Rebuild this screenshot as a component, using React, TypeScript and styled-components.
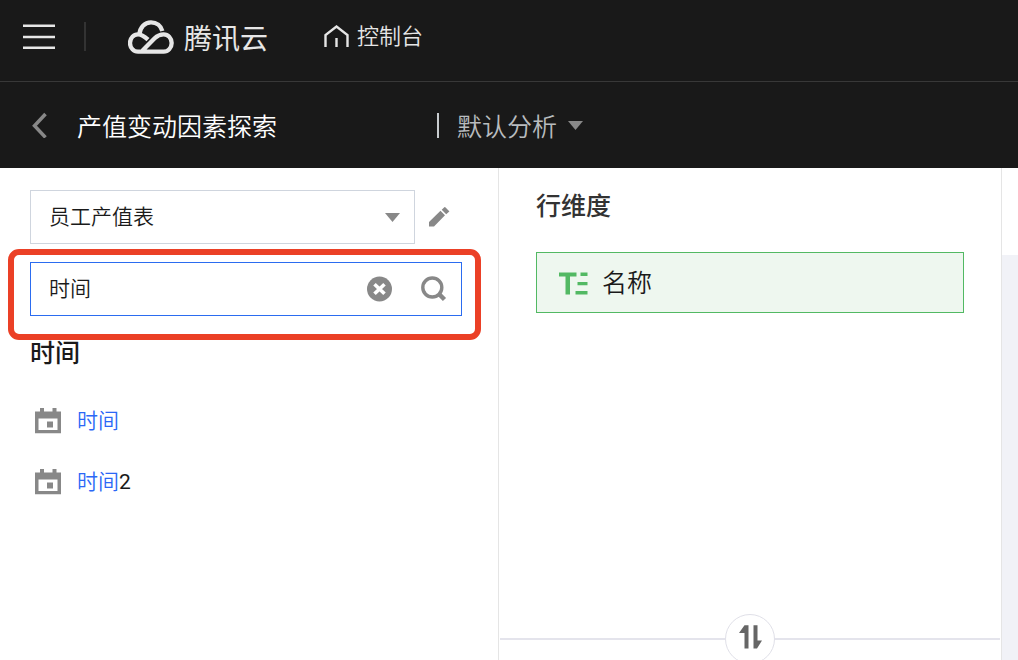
import React, { useState } from 'react';
import styled, { createGlobalStyle } from 'styled-components';

const headingFont = '"Noto Sans CJK SC", Roboto, sans-serif';

const GlobalStyle = createGlobalStyle`
  *, *::before, *::after { box-sizing: border-box; }
  body {
    margin: 0;
    background: #fff;
    color: #1a1a1a;
    font-family: Roboto, "Noto Sans CJK SC", sans-serif;
    font-size: 21px;
    font-weight: 350;
    line-height: 30px;
  }
  button, input, select { font: inherit; color: inherit; }
  h1, h2, ul { margin: 0; padding: 0; }
  svg { display: block; flex: none; }
`;

const Shell = styled.div`
  display: flex;
  flex-direction: column;
  height: 100vh;
  overflow: hidden;
`;

const TopBar = styled.header`
  display: flex;
  flex: none;
  align-items: center;
  height: 82px;
  padding: 0 23px 8px;
  background: #191919;
  border-bottom: 1px solid #383838;
  color: #e6e6e6;
`;

const IconButton = styled.button`
  display: flex;
  flex: none;
  padding: 0;
  border: 0;
  background: none;
  color: #888;
  cursor: pointer;
`;

const MenuButton = styled(IconButton)`
  color: #e6e6e6;
`;

const TopDivider = styled.span`
  width: 2px;
  height: 29px;
  margin: 0 42px 0 29px;
  background: #333;
`;

const Brand = styled.a`
  display: flex;
  align-items: center;
  gap: 10px;
  color: inherit;
  font-family: ${headingFont};
  font-size: 28px;
  font-weight: 400;
  line-height: 40px;
  text-decoration: none;
`;

const ConsoleLink = styled.a`
  display: flex;
  align-items: center;
  gap: 8px;
  margin-left: 56px;
  color: inherit;
  font-size: 22px;
  text-decoration: none;
`;

const TitleBar = styled.div`
  display: flex;
  flex: none;
  align-items: center;
  height: 86px;
  padding: 0 32px;
  background: #191919;
  color: #fff;
  font-family: ${headingFont};
  font-size: 25px;
  line-height: 36px;
`;

const Title = styled.h1`
  width: 360px;
  margin-left: 29px;
  font-size: 25px;
  font-weight: inherit;
`;

const AnalysisButton = styled.button`
  display: flex;
  align-items: center;
  gap: 11px;
  padding: 0;
  border: 0;
  background: none;
  color: #b8bcbf;
  cursor: pointer;

  &::before {
    content: "";
    width: 2px;
    height: 25px;
    margin-right: 7px;
    background: #c8cccf;
  }
  svg { color: #888; }
`;

const Workspace = styled.main`
  display: grid;
  flex: 1;
  grid-template-columns: 499px minmax(0, 1fr) 17px;
  min-height: 0;
`;

const FieldPanel = styled.aside`
  padding: 22px 36px 0 30px;
  border-right: 1px solid #e5e5e5;
`;

const TableRow = styled.div`
  display: flex;
  align-items: center;
  gap: 14px;
  padding-right: 12px;
`;

const SelectBox = styled.label`
  display: grid;
  flex: 1;
  grid-template-columns: minmax(0, 1fr) 15px;
  align-items: center;
  height: 54px;
  padding-right: 14px;
  border: 1px solid #cfd5de;
  color: #888;
`;

const Select = styled.select`
  grid-area: 1 / 1 / 2 / 3;
  width: 100%;
  height: 52px;
  padding: 0 18px;
  border: 0;
  outline: 0;
  appearance: none;
  background: none;
  color: #1a1a1a;
`;

const SelectArrow = styled.span`
  grid-area: 1 / 2;
  pointer-events: none;
`;

const SearchBox = styled.div`
  position: relative;
  display: flex;
  align-items: center;
  gap: 28px;
  height: 54px;
  margin-top: 18px;
  padding: 0 14px 0 18px;
  border: 1px solid #2b6cf0;

  &::after {
    content: "";
    position: absolute;
    inset: -14px -20px -25px -23px;
    border: 6px solid #eb4026;
    border-radius: 11px;
    pointer-events: none;
  }
`;

const SearchInput = styled.input`
  flex: 1;
  min-width: 0;
  padding: 0;
  border: 0;
  outline: 0;
  background: none;
`;

const GroupTitle = styled.h2`
  margin-top: 17px;
  font-family: ${headingFont};
  font-size: 25px;
  font-weight: 500;
  line-height: 36px;
`;

const FieldList = styled.ul`
  margin-top: 21px;
  list-style: none;
`;

const FieldItem = styled.li`
  display: flex;
  align-items: center;
  gap: 16px;
  height: 61px;
  padding-left: 5px;
  font-weight: 400;
`;

const Match = styled.span`
  color: #2b67f6;
  font-weight: 350;
`;

const DimensionPanel = styled.section`
  display: flex;
  flex-direction: column;
  min-width: 0;
`;

const DropZone = styled.div`
  flex: none;
  height: 446px;
  padding: 18px 37px 0;
`;

const ZoneTitle = styled.h2`
  color: #333;
  font-family: ${headingFont};
  font-size: 25px;
  font-weight: 500;
  line-height: 36px;
`;

const Chip = styled.div`
  display: flex;
  align-items: center;
  gap: 14px;
  height: 61px;
  margin-top: 30px;
  padding: 2px 22px 0;
  border: 1px solid #52b963;
  background: #eef7ef;
  color: #1a1a1a;
  font-size: 25px;
`;

const SwapDivider = styled.div`
  display: flex;
  flex: none;
  align-items: center;
  padding: 0 1px;

  &::before, &::after {
    content: "";
    flex: 1;
    height: 2px;
    background: #e4e4ec;
  }
`;

const SwapButton = styled.button`
  display: flex;
  align-items: center;
  justify-content: center;
  width: 50px;
  height: 50px;
  padding: 0 0 4px;
  border: 1px solid #e0e0e8;
  border-radius: 50%;
  background: #fff;
  cursor: pointer;
`;

const CanvasEdge = styled.section`
  padding-top: 87px;
  border-left: 1px solid #e5e5e5;
  background: #f1f2f7 content-box;
`;

const Caret = () => (
  <svg width="15" height="9" viewBox="0 0 15 9" aria-hidden="true">
    <path d="M0 0h15L7.500 9z" fill="currentColor" />
  </svg>
);

const CloudLogo = () => (
  <svg width="46" height="34" viewBox="384 58 138 102" fill="none" stroke="currentColor" strokeWidth="13" aria-hidden="true">
    <path d="M444 117C431 105 424 101 414 101A24 26 0 0 0 414 153H491A24 26 0 0 0 491 101C479 101 471 106 464 113L427 150" />
    <path d="M418 101C420 80 434 65 453 65C470 65 483 76 487 91" />
  </svg>
);

const HomeIcon = () => (
  <svg width="25" height="24" viewBox="0 0 25 24" fill="none" stroke="currentColor" strokeWidth="2.400" aria-hidden="true">
    <path d="M1.500 22V10L12.500 1.500L23.500 10V22M12.500 13V22" />
  </svg>
);

const CalendarIcon = () => (
  <svg width="26" height="26" viewBox="0 0 26 26" fill="#888" aria-hidden="true">
    <path fillRule="evenodd" d="M0 3.500h5V0h4v3.500h8.500V0h4v3.500H26v21.800H0zM3.500 10.500v11.500h19V10.500z" />
    <path d="M12 13.500h6v6h-6z" />
  </svg>
);

export default function App() {
  const [keyword, setKeyword] = useState('时间');

  return (
    <>
      <GlobalStyle />
      <Shell>
        <TopBar>
          <MenuButton type="button" aria-label="菜单">
            <svg width="32" height="26" viewBox="0 0 32 26" fill="currentColor">
              <path d="M0 0.500h32v2.500H0zM0 11.700h32v2.500H0zM0 22.500h32v2.500H0z" />
            </svg>
          </MenuButton>
          <TopDivider />
          <Brand href="#">
            <CloudLogo />
            腾讯云
          </Brand>
          <ConsoleLink href="#console">
            <HomeIcon />
            控制台
          </ConsoleLink>
        </TopBar>

        <TitleBar>
          <IconButton type="button" aria-label="返回">
            <svg width="16" height="26" viewBox="0 0 16 26" fill="none" stroke="currentColor" strokeWidth="3.500">
              <path d="M13.500 2L2.500 13.700L13.500 25.400" />
            </svg>
          </IconButton>
          <Title>产值变动因素探索</Title>
          <AnalysisButton type="button">
            默认分析
            <Caret />
          </AnalysisButton>
        </TitleBar>

        <Workspace>
          <FieldPanel>
            <TableRow>
              <SelectBox>
                <Select aria-label="数据表">
                  <option>员工产值表</option>
                </Select>
                <SelectArrow>
                  <Caret />
                </SelectArrow>
              </SelectBox>
              <IconButton type="button" aria-label="编辑">
                <svg width="21" height="20" viewBox="0 0 21 20" fill="currentColor">
                  <path d="M0 19.500V15L11.500 3.700L16 8.200L5 19.500zM12.700 2.700L15.300 0.200Q15.800 -0.200 16.300 0.200L20 3.900Q20.500 4.400 20 4.800L17.200 7.200z" />
                </svg>
              </IconButton>
            </TableRow>

            <SearchBox>
              <SearchInput
                type="text"
                aria-label="搜索字段"
                value={keyword}
                onChange={(event) => setKeyword(event.target.value)}
              />
              <IconButton type="button" aria-label="清除" onClick={() => setKeyword('')}>
                <svg width="26" height="26" viewBox="0 0 26 26">
                  <circle cx="12.500" cy="13" r="12.500" fill="currentColor" />
                  <path d="M7.500 8.200L17.500 17.800M17.500 8.200L7.500 17.800" stroke="#fff" strokeWidth="3.600" />
                </svg>
              </IconButton>
              <IconButton type="button" aria-label="搜索">
                <svg width="26" height="26" viewBox="0 0 26 26" fill="none" stroke="currentColor">
                  <circle cx="11.300" cy="11.500" r="9.500" strokeWidth="3.400" />
                  <path d="M17.500 17.500L23.500 23.500" strokeWidth="4.500" />
                </svg>
              </IconButton>
            </SearchBox>

            <GroupTitle>时间</GroupTitle>
            <FieldList>
              <FieldItem>
                <CalendarIcon />
                <span><Match>时间</Match></span>
              </FieldItem>
              <FieldItem>
                <CalendarIcon />
                <span><Match>时间</Match>2</span>
              </FieldItem>
            </FieldList>
          </FieldPanel>

          <DimensionPanel>
            <DropZone>
              <ZoneTitle>行维度</ZoneTitle>
              <Chip>
                <svg width="29" height="23" viewBox="0 0 29 23" fill="#52b963" aria-hidden="true">
                  <path d="M0 0.500h17.500v4h-6.500v18H6.500v-18H0zM21.500 0.500H28.500v3.500h-7zM18.500 10H28.500v3.200H18.500zM16.500 19H28.500v3.500H16.500z" />
                </svg>
                名称
              </Chip>
            </DropZone>
            <SwapDivider>
              <SwapButton type="button" aria-label="行列互换">
                <svg width="23" height="24" viewBox="0 0 23 24" fill="#666" aria-hidden="true">
                  <path d="M5.500 0.300H9.500V23.500H5.500V8H0zM14.500 0.300H18.500V15.500H23L18 23.500H14.500z" />
                </svg>
              </SwapButton>
            </SwapDivider>
          </DimensionPanel>

          <CanvasEdge aria-label="画布" />
        </Workspace>
      </Shell>
    </>
  );
}
